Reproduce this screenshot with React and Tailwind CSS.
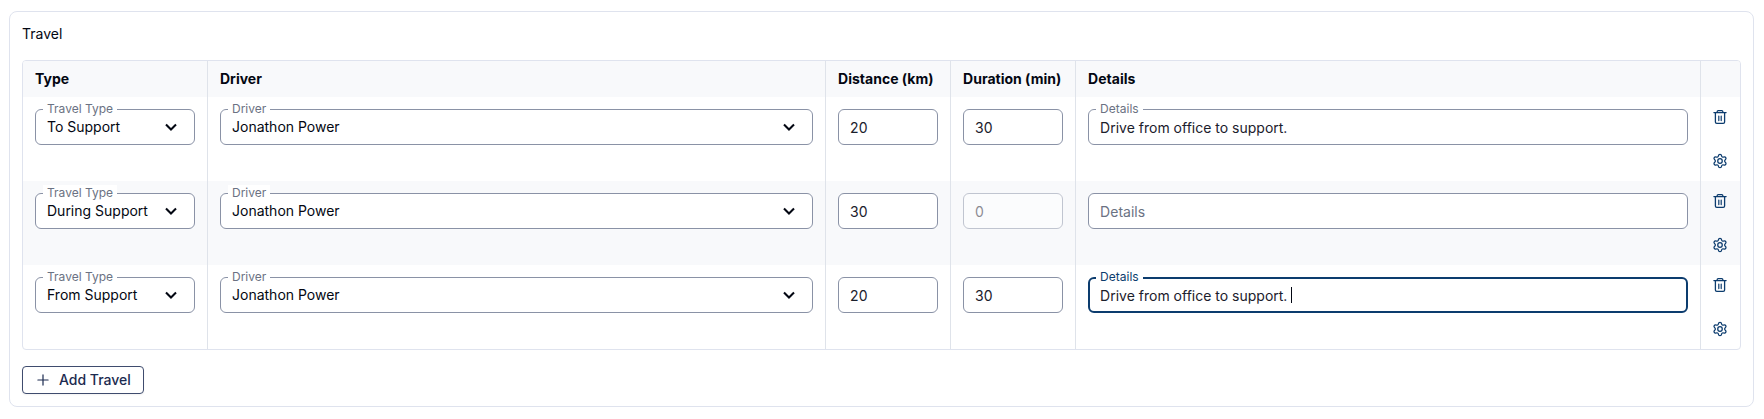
import React, { useEffect, useLayoutEffect, useRef, useState } from 'react';

const TYPES = ['To Support', 'During Support', 'From Support'];
const DRIVERS = ['Jonathon Power'];

const INITIAL_ROWS = [
  { id: 1, type: 'To Support', driver: 'Jonathon Power', distance: '20', duration: '30', details: 'Drive from office to support.' },
  { id: 2, type: 'During Support', driver: 'Jonathon Power', distance: '30', duration: '0', details: '' },
  { id: 3, type: 'From Support', driver: 'Jonathon Power', distance: '20', duration: '30', details: 'Drive from office to support. ' },
];

const fieldClass =
  'block h-9 w-full rounded-md border border-[#8a92a6] bg-white px-[11px] text-sm outline-none placeholder:text-[#6b7283]';

function TrashIcon() {
  return (
    <svg viewBox="0 0 16 16" className="size-4" fill="none" stroke="currentColor" strokeWidth="1.3" strokeLinecap="round" aria-hidden="true">
      <path d="M1.9 3.6h12.2" />
      <path d="M5.2 3.4V2.6c0-.6.4-1 1-1h3.6c.6 0 1 .4 1 1v.8" />
      <path d="M3.4 3.8v9.2c0 .8.6 1.4 1.4 1.4h6.4c.8 0 1.4-.6 1.4-1.4V3.8" />
      <path d="M6.8 7v4.6M9.2 7v4.6" strokeWidth="1.2" />
    </svg>
  );
}

function GearIcon() {
  return (
    <svg viewBox="0 0 24 24" className="size-4" fill="none" stroke="currentColor" strokeWidth="1.9" strokeLinecap="round" strokeLinejoin="round" aria-hidden="true">
      <path d="M9.671 4.136a2.34 2.34 0 0 1 4.659 0 2.34 2.34 0 0 0 3.319 1.915 2.34 2.34 0 0 1 2.33 4.033 2.34 2.34 0 0 0 0 3.831 2.34 2.34 0 0 1-2.33 4.033 2.34 2.34 0 0 0-3.319 1.915 2.34 2.34 0 0 1-4.659 0 2.34 2.34 0 0 0-3.32-1.915 2.34 2.34 0 0 1-2.33-4.033 2.34 2.34 0 0 0 0-3.831A2.34 2.34 0 0 1 6.35 6.051a2.34 2.34 0 0 0 3.319-1.915" />
      <circle cx="12" cy="12" r="3.4" />
    </svg>
  );
}

function FloatingLabel({ htmlFor, className = 'text-[#6b7283]', children }) {
  return (
    <label htmlFor={htmlFor} className={`absolute -top-2 left-2 bg-white px-1 text-xs ${className}`}>
      {children}
    </label>
  );
}

function SelectField({ id, label, value, options, onChange }) {
  return (
    <div className="relative">
      <select id={id} value={value} onChange={e => onChange(e.target.value)} className={`${fieldClass} appearance-none`}>
        {options.map(option => (
          <option key={option}>{option}</option>
        ))}
      </select>
      <FloatingLabel htmlFor={id}>{label}</FloatingLabel>
      <svg
        viewBox="0 0 24 24"
        className="pointer-events-none absolute top-1.5 right-3 size-6"
        fill="none"
        stroke="currentColor"
        strokeWidth="2.1"
        aria-hidden="true"
      >
        <path d="m7 9.4 5 5 5-5" />
      </svg>
    </div>
  );
}

function DetailsField({ id, value, autoFocus, onChange }) {
  const ref = useRef(null);
  const [focused, setFocused] = useState(false);
  const [caretX, setCaretX] = useState(0);

  useEffect(() => {
    if (autoFocus) ref.current.focus();
  }, []);

  // The native caret is hidden, so place our own after the typed text
  const moveCaret = () => {
    const input = ref.current;
    const style = getComputedStyle(input);
    const ctx = document.createElement('canvas').getContext('2d');
    ctx.font = `${style.fontWeight} ${style.fontSize} ${style.fontFamily}`;
    setCaretX(Math.round(12 + ctx.measureText(value.slice(0, input.selectionStart)).width));
  };

  useLayoutEffect(() => {
    if (autoFocus) ref.current.setSelectionRange(value.length, value.length);
    moveCaret();
  }, []);

  return (
    <div className="group relative">
      <input
        id={id}
        ref={ref}
        type="text"
        aria-label="Details"
        placeholder="Details"
        value={value}
        onChange={e => onChange(e.target.value)}
        onSelect={moveCaret}
        onFocus={() => setFocused(true)}
        onBlur={() => setFocused(false)}
        className={`${fieldClass} text-[#1b202c] caret-transparent focus:border-2 focus:border-[#0c3c6e] focus:px-[10px]`}
      />
      {value && (
        <FloatingLabel htmlFor={id} className="text-[#6b7283] group-focus-within:text-[#0c3c6e]">
          Details
        </FloatingLabel>
      )}
      {focused && <span className="pointer-events-none absolute top-2.5 h-4 w-px bg-gray-950" style={{ left: caretX }} />}
    </div>
  );
}

export default function App() {
  const [rows, setRows] = useState(INITIAL_ROWS);

  const update = (id, key, value) => setRows(rows.map(row => (row.id === id ? { ...row, [key]: value } : row)));
  const remove = id => setRows(rows.filter(row => row.id !== id));
  const add = () =>
    setRows([...rows, { id: Date.now(), type: 'To Support', driver: DRIVERS[0], distance: '', duration: '', details: '' }]);

  const th = 'h-9 border-r border-[#dfe3ea] px-3 text-left font-bold last:border-r-0';
  const td = 'border-r border-[#dfe3ea] px-3 pt-3 align-top';
  const iconButton = 'flex h-10 w-[38px] items-center justify-center';

  return (
    <main className="mt-[11px] mr-[10px] ml-[9px] rounded-lg border border-[#dfe3ee] bg-white p-3 font-[Inter,sans-serif] text-sm text-gray-950">
      <h2 className="mb-4">Travel</h2>

      <div className="overflow-hidden rounded border border-[#dfe3ee]">
        <table className="w-full table-fixed border-separate border-spacing-0">
          <colgroup>
            <col className="w-[185px]" />
            <col className="w-[36%]" />
            <col className="w-[125px]" />
            <col className="w-[125px]" />
            <col />
            <col className="w-[39px]" />
          </colgroup>
          <thead className="bg-[#f8f9fb]">
            <tr>
              <th className={th}>Type</th>
              <th className={th}>Driver</th>
              <th className={th}>Distance (km)</th>
              <th className={th}>Duration (min)</th>
              <th className={th}>Details</th>
              <th className={th} aria-label="Actions"></th>
            </tr>
          </thead>
          <tbody>
            {rows.map(row => (
              <tr key={row.id} className="even:bg-[#f8f9fb]">
                <td className={td}>
                  <SelectField
                    id={`type-${row.id}`}
                    label="Travel Type"
                    value={row.type}
                    options={TYPES}
                    onChange={value => update(row.id, 'type', value)}
                  />
                </td>
                <td className={td}>
                  <SelectField
                    id={`driver-${row.id}`}
                    label="Driver"
                    value={row.driver}
                    options={DRIVERS}
                    onChange={value => update(row.id, 'driver', value)}
                  />
                </td>
                <td className={td}>
                  <input
                    type="text"
                    inputMode="numeric"
                    aria-label="Distance (km)"
                    value={row.distance}
                    onChange={e => update(row.id, 'distance', e.target.value)}
                    className={`${fieldClass} text-[#1b202c]`}
                  />
                </td>
                <td className={td}>
                  <input
                    type="text"
                    inputMode="numeric"
                    aria-label="Duration (min)"
                    value={row.duration}
                    disabled={row.type === 'During Support'}
                    onChange={e => update(row.id, 'duration', e.target.value)}
                    className={`${fieldClass} text-[#1b202c] disabled:opacity-50`}
                  />
                </td>
                <td className={td}>
                  <DetailsField
                    id={`details-${row.id}`}
                    value={row.details}
                    autoFocus={row.id === 3}
                    onChange={value => update(row.id, 'details', value)}
                  />
                </td>
                <td className="p-0">
                  <div className="flex flex-col gap-1 text-[#0c3c6e]">
                    <button type="button" aria-label="Delete travel" onClick={() => remove(row.id)} className={iconButton}>
                      <TrashIcon />
                    </button>
                    <button type="button" aria-label="Travel settings" className={iconButton}>
                      <GearIcon />
                    </button>
                  </div>
                </td>
              </tr>
            ))}
          </tbody>
        </table>
      </div>

      <button
        type="button"
        onClick={add}
        className="mt-4 flex h-7 items-center gap-2 rounded border border-[#3f4c6e] bg-white px-3 font-medium text-[#1c2b50] shadow-xs"
      >
        <svg viewBox="0 0 16 16" className="size-4" fill="none" stroke="currentColor" strokeWidth="1.2" strokeLinecap="round" aria-hidden="true">
          <path d="M8 2.9v10.2M2.9 8h10.2" />
        </svg>
        Add Travel
      </button>
    </main>
  );
}
